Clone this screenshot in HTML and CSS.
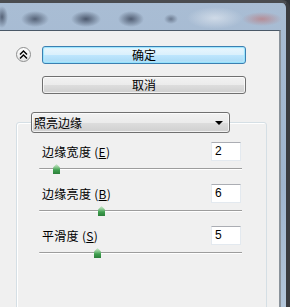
FILE: index.html
```html
<!DOCTYPE html>
<html lang="zh-CN">
<head>
    <meta charset="UTF-8">
    <meta name="viewport" content="width=device-width, initial-scale=1.0">
    <title>照亮边缘</title>
    <link rel="stylesheet" href="styles.css">
</head>
<body>
    <div class="window">
        <div class="titlebar"></div>
        <div class="client">
            <div class="top-row">
                <button class="collapse" title="折叠">
                    <svg width="9" height="9" viewBox="0 0 9 9">
                        <polyline points="1,4.5 4.5,1 8,4.5" fill="none" stroke="#000" stroke-width="1.4"/>
                        <polyline points="1,8.5 4.5,5 8,8.5" fill="none" stroke="#000" stroke-width="1.4"/>
                    </svg>
                </button>
                <button class="btn btn-default">确定</button>
            </div>
            <div class="cancel-row">
                <button class="btn">取消</button>
            </div>

            <fieldset class="group">
                <legend>
                    <div class="select">
                        <span>照亮边缘</span>
                        <span class="arrow"></span>
                    </div>
                </legend>

                <div class="params">
                    <div class="param">
                        <div class="param-head">
                            <label>边缘宽度 (<u>E</u>)</label>
                            <input type="text" value="2">
                        </div>
                        <div class="slider">
                            <div class="track"></div>
                            <span class="thumb" style="left: 14px"></span>
                        </div>
                    </div>
                    <div class="param">
                        <div class="param-head">
                            <label>边缘亮度 (<u>B</u>)</label>
                            <input type="text" value="6">
                        </div>
                        <div class="slider">
                            <div class="track"></div>
                            <span class="thumb" style="left: 59px"></span>
                        </div>
                    </div>
                    <div class="param">
                        <div class="param-head">
                            <label>平滑度 (<u>S</u>)</label>
                            <input type="text" value="5">
                        </div>
                        <div class="slider">
                            <div class="track"></div>
                            <span class="thumb" style="left: 55px"></span>
                        </div>
                    </div>
                </div>
            </fieldset>
        </div>
    </div>
</body>
</html>
```
FILE: styles.css
```css
html, body {
    margin: 0;
    height: 307px;
    overflow: hidden;
    background: #2f3338;
}

body {
    font-family: "Noto Sans CJK SC", "Liberation Sans", sans-serif;
    font-size: 12px;
    color: #000;
}

.window {
    height: 304px;
    display: flex;
    flex-direction: column;
    border-top: 3px solid #4a4c50;
    border-right: 4px solid #3a3c40;
    border-top-right-radius: 8px;
    background: linear-gradient(180deg, #a9bdd4, #9fb5ce 60%, #b3c6da);
}

.titlebar {
    height: 27px;
    flex: none;
    background:
        radial-gradient(ellipse 6px 11px at 2px 14px, rgba(50, 60, 80, 0.7), transparent),
        radial-gradient(ellipse 14px 8px at 35px 16px, rgba(50, 60, 80, 0.7), transparent),
        radial-gradient(ellipse 15px 8px at 86px 16px, rgba(45, 55, 75, 0.75), transparent),
        radial-gradient(ellipse 13px 8px at 131px 16px, rgba(45, 55, 75, 0.7), transparent),
        radial-gradient(ellipse 7px 5px at 171px 16px, rgba(55, 65, 85, 0.55), transparent),
        radial-gradient(ellipse 28px 11px at 215px 15px, rgba(220, 228, 238, 0.75), transparent),
        radial-gradient(ellipse 20px 7px at 262px 16px, rgba(190, 110, 110, 0.6), transparent);
}

.client {
    flex: 1;
    margin-right: 5px;
    border-top: 1px solid #4a5867;
    border-right: 2px solid #8b939b;
    background: #f0f0f0;
    overflow: hidden;
}

.top-row {
    display: flex;
    align-items: center;
    gap: 11px;
    padding: 15px 0 0 16px;
}

.collapse {
    width: 15px;
    height: 15px;
    padding: 0;
    margin-top: -2px;
    border: 1px solid #8e8f8f;
    border-radius: 50%;
    background: linear-gradient(180deg, #ffffff, #e6e6e6);
    display: flex;
    align-items: center;
    justify-content: center;
}

.btn {
    width: 204px;
    height: 18px;
    padding: 0;
    font-family: inherit;
    font-size: 12px;
    line-height: 16px;
    color: #000;
    border: 1px solid #707070;
    border-radius: 3px;
    background: linear-gradient(180deg, #f2f2f2 0%, #ebebeb 50%, #dddddd 51%, #cfcfcf 100%);
    box-shadow: inset 0 0 0 1px rgba(255, 255, 255, 0.7);
}

.btn-default {
    border-color: #3c7fb1;
    background: linear-gradient(180deg, #eaf6fd 0%, #d9f0fc 50%, #bee6fd 51%, #a7d9f5 100%);
    box-shadow: inset 0 0 0 1px #48d2fb55, inset 0 0 2px 1px #c5f0ff;
}

.cancel-row {
    padding: 12px 0 0 42px;
}

.group {
    box-sizing: border-box;
    width: 251px;
    height: 220px;
    margin: 18px 0 0 16px;
    padding: 0 14px;
    border: 1px solid #d5dfe5;
    border-radius: 3px;
    box-shadow: inset 1px 1px 0 #fff;
}

.group legend {
    padding: 0;
}

.select {
    box-sizing: border-box;
    width: 199px;
    height: 21px;
    display: flex;
    align-items: center;
    justify-content: space-between;
    padding: 0 6px 0 2px;
    border: 1px solid #707070;
    border-radius: 3px;
    background: linear-gradient(180deg, #f2f2f2 0%, #ebebeb 50%, #dddddd 51%, #cfcfcf 100%);
    box-shadow: inset 0 0 0 1px rgba(255, 255, 255, 0.7);
}

.arrow {
    width: 0;
    height: 0;
    border-left: 4px solid transparent;
    border-right: 4px solid transparent;
    border-top: 4px solid #000;
    margin-top: 1px;
}

.params {
    width: 203px;
    padding: 9px 0 0 8px;
}

.param-head {
    display: flex;
    align-items: center;
    justify-content: space-between;
    height: 19px;
    padding: 0 1px 0 3px;
}

.param-head label {
    letter-spacing: 0.3px;
}

.param-head input {
    box-sizing: border-box;
    width: 30px;
    height: 19px;
    padding: 0 0 2px 3px;
    font-family: "Liberation Sans", sans-serif;
    font-size: 12px;
    border: 1px solid #e3e9ef;
    border-top-color: #abadb3;
    background: #fff;
    outline: none;
}

.slider {
    position: relative;
    box-sizing: border-box;
    height: 23px;
    padding-top: 7px;
}

.track {
    height: 0;
    border-top: 1px solid #9d9d9d;
    border-bottom: 1px solid #ffffff;
    border-top-left-radius: 2px;
    border-bottom-left-radius: 2px;
}

.thumb {
    position: absolute;
    top: 3px;
    width: 7px;
    height: 10px;
    background: linear-gradient(180deg, #cfe9d0 0%, #8fcb95 30%, #3f9f4f 60%, #2c7f3a 100%);
    clip-path: polygon(50% 0, 100% 35%, 100% 100%, 0 100%, 0 35%);
}
```
